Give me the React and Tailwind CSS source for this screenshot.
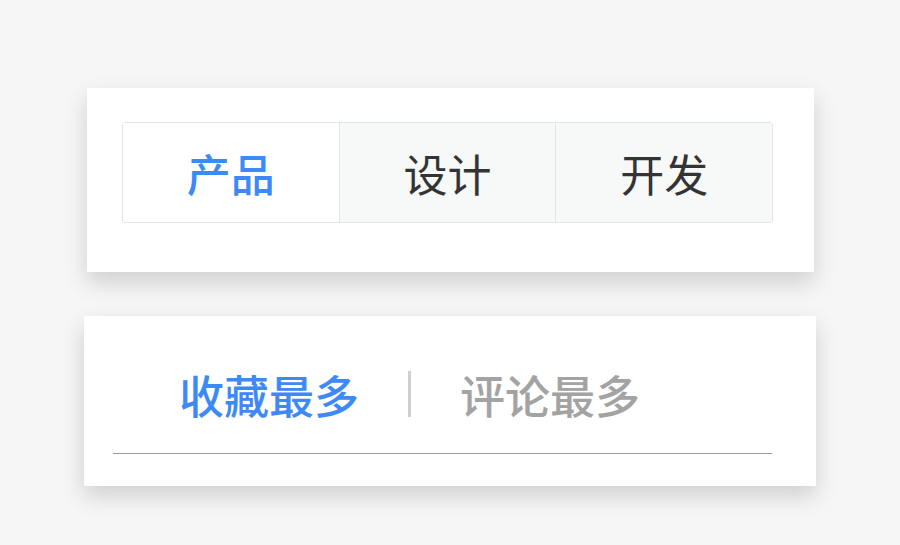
import React, { useState } from "react";

const SEGMENTS = ["产品", "设计", "开发"];
const TABS = ["收藏最多", "评论最多"];

const SegmentedCard = () => {
  const [active, setActive] = useState(0);
  return (
    <div className="ml-[87px] mt-[88px] w-[727px] h-[184px] bg-white shadow-[0_10px_22px_rgba(0,0,0,0.16)] pl-[35px] pt-[34px]">
      <div className="flex w-[651px] h-[101px] border border-[#e3e4e4] rounded-[3px] overflow-hidden">
        {SEGMENTS.map((label, i) => (
          <button
            key={label}
            onClick={() => setActive(i)}
            className={`flex-1 flex items-center justify-center text-[44px] leading-none ${
              i > 0 ? "border-l border-[#e3e4e4]" : ""
            } ${active === i ? "bg-white text-[#3d89f5] font-medium" : "bg-[#f7f8f8] text-[#343434] font-normal"}`}
          >
            {label}
          </button>
        ))}
      </div>
    </div>
  );
};

const TabCard = () => {
  const [active, setActive] = useState(0);
  return (
    <div className="ml-[84px] mt-[44px] w-[732px] h-[170px] bg-white shadow-[0_10px_22px_rgba(0,0,0,0.16)] pl-[29px] pt-[49px]">
      <div className="w-[659px] border-b border-[#9a9a9a]">
        <div className="flex items-center h-[58px] pl-[66px] mb-[30px]">
          {TABS.map((label, i) => (
            <React.Fragment key={label}>
              {i > 0 && <span className="w-[3px] h-[46px] bg-[#cfcfcf] mx-[49px]" />}
              <button
                onClick={() => setActive(i)}
                className={`text-[45px] leading-none font-medium ${active === i ? "text-[#3d89f5]" : "text-[#a3a3a3]"}`}
              >
                {label}
              </button>
            </React.Fragment>
          ))}
        </div>
      </div>
    </div>
  );
};

export default function App() {
  return (
    <div
      className="w-[900px] h-[545px] bg-[#f6f6f6] flex flex-col overflow-hidden"
      style={{ fontFamily: '"Noto Sans CJK SC", "Noto Sans", sans-serif' }}
    >
      <SegmentedCard />
      <TabCard />
    </div>
  );
}
